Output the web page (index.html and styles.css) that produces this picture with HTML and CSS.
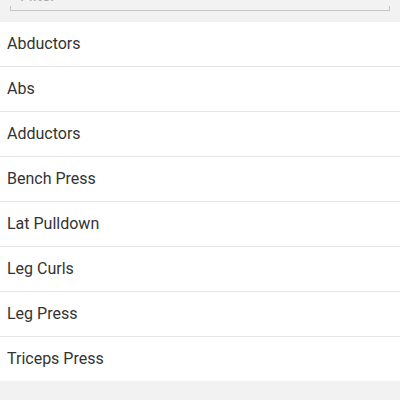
FILE: index.html
```html
<!DOCTYPE html>
<html lang="en">
<head>
  <meta charset="UTF-8" />
  <title>Exercises</title>
  <link rel="stylesheet" href="styles.css">
</head>
<body>

  <div class="filtro">
    <div class="campo">
      <input type="text" placeholder="Filter" />
    </div>
  </div>

  <ul class="lista">
    <li>Abductors</li>
    <li>Abs</li>
    <li>Adductors</li>
    <li>Bench Press</li>
    <li>Lat Pulldown</li>
    <li>Leg Curls</li>
    <li>Leg Press</li>
    <li>Triceps Press</li>
  </ul>

</body>
</html>
```

FILE: styles.css
```css
body {
  margin: 0;
  background-color: #f2f2f2;
  font-family: Roboto, "Noto Sans", sans-serif;
  overflow: hidden;
}

.filtro {
  height: 22px;
  padding: 0 10px 11px;
  box-sizing: border-box;
  display: flex;
  align-items: flex-end;
}

.campo {
  flex: 1;
  flex-shrink: 0;
  height: 30px;
  border-bottom: 1px solid #c6c6c6;
  position: relative;
}

.campo::before,
.campo::after {
  content: "";
  position: absolute;
  bottom: 0;
  width: 1px;
  height: 4px;
  background: #c6c6c6;
}

.campo::before { left: 0; }
.campo::after { right: 0; }

.campo input {
  width: 100%;
  height: 100%;
  box-sizing: border-box;
  border: none;
  background: transparent;
  font-family: inherit;
  font-size: 16px;
  padding: 0 0 0 10px;
  outline: none;
}

.campo input::placeholder {
  color: #a8a8a8;
}

.lista {
  list-style: none;
  margin: 0;
  padding: 0;
  background: #fff;
}

.lista li {
  height: 44px;
  line-height: 44px;
  padding-left: 7px;
  font-size: 16px;
  color: #333;
  border-bottom: 1px solid #e6e6e6;
}

.lista li:last-child {
  border-bottom: none;
}
```
